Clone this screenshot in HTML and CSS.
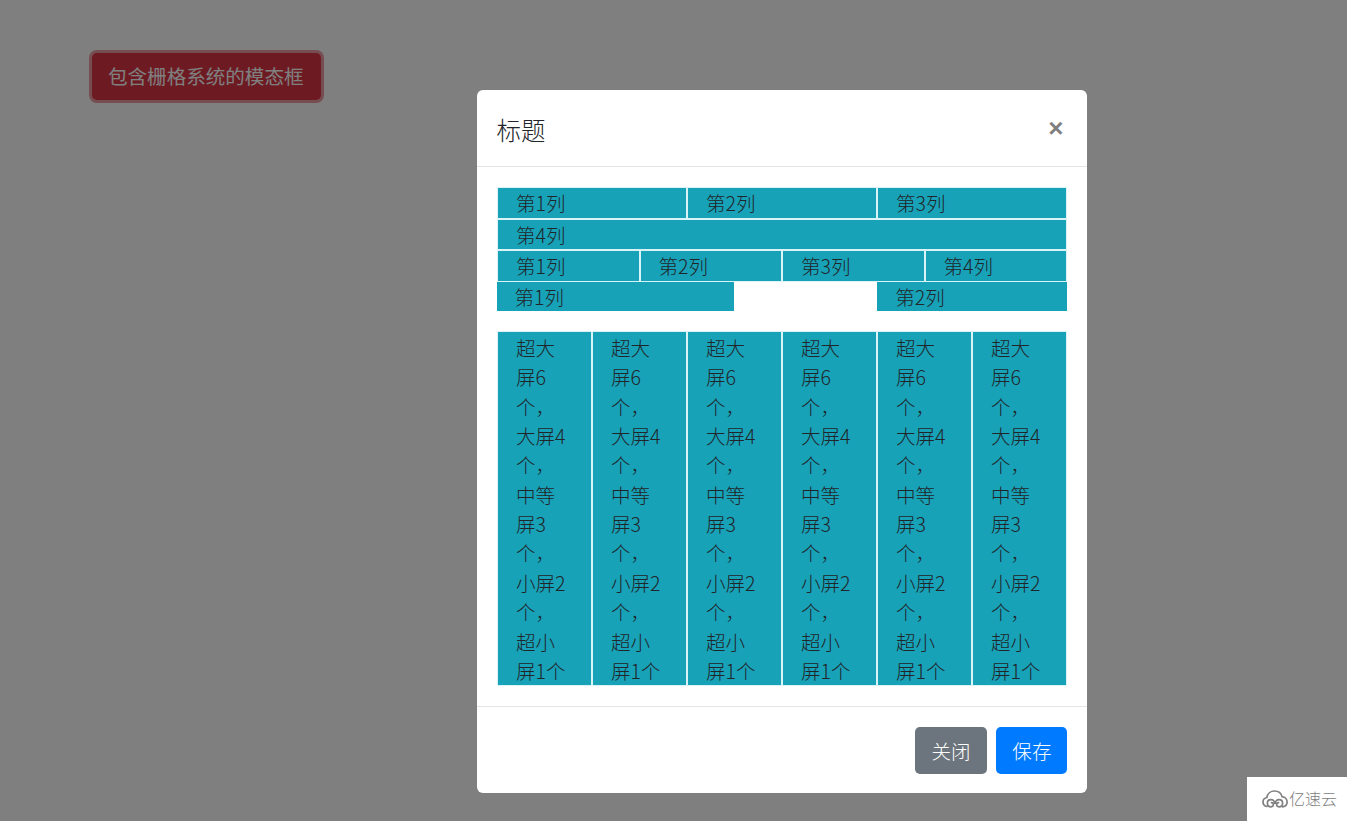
FILE: index.html
```html
<!DOCTYPE html>
<html lang="zh-CN">
<head>
    <meta charset="UTF-8">
    <meta name="viewport" content="width=device-width, initial-scale=1.0">
    <title>模态框</title>
    <link rel="stylesheet" href="styles.css">
</head>
<body>
    <button class="btn btn-danger btn-focus">包含栅格系统的模态框</button>

    <div class="backdrop"></div>

    <div class="modal">
        <div class="modal-header">
            <h5 class="modal-title">标题</h5>
            <span class="close">&times;</span>
        </div>
        <div class="modal-body">
            <div class="row">
                <div class="col col-4">第1列</div>
                <div class="col col-4">第2列</div>
                <div class="col col-4">第3列</div>
                <div class="col col-12">第4列</div>
            </div>
            <div class="row">
                <div class="col col-3">第1列</div>
                <div class="col col-3">第2列</div>
                <div class="col col-3">第3列</div>
                <div class="col col-3">第4列</div>
            </div>
            <div class="row row-offset">
                <div class="col plain col-5">第1列</div>
                <div class="col plain col-4 offset-3">第2列</div>
            </div>
            <div class="row row-tall">
                <div class="col col-2">超大屏6个，大屏4个，中等屏3个，小屏2个，超小屏1个</div>
                <div class="col col-2">超大屏6个，大屏4个，中等屏3个，小屏2个，超小屏1个</div>
                <div class="col col-2">超大屏6个，大屏4个，中等屏3个，小屏2个，超小屏1个</div>
                <div class="col col-2">超大屏6个，大屏4个，中等屏3个，小屏2个，超小屏1个</div>
                <div class="col col-2">超大屏6个，大屏4个，中等屏3个，小屏2个，超小屏1个</div>
                <div class="col col-2">超大屏6个，大屏4个，中等屏3个，小屏2个，超小屏1个</div>
            </div>
        </div>
        <div class="modal-footer">
            <button class="btn btn-secondary">关闭</button>
            <button class="btn btn-primary">保存</button>
        </div>
    </div>

    <!-- 水印 -->
    <div class="watermark">
        <svg class="watermark-logo" viewBox="0 0 26 20" width="26" height="20" fill="none" stroke="#808080" stroke-width="1.7" stroke-linecap="round">
            <path d="M5 17.5C2.6 17 1 15.2 1 13c0-2.3 1.6-4.1 3.9-4.5C5.4 4.6 8.6 2 12.5 2c3.6 0 6.7 2.3 7.6 5.6 2.9.3 5 2.6 5 5.4 0 2.6-1.8 4.5-4.4 4.8"/>
            <path d="M12.6 14.2c0-2-1.5-3.5-3.6-3.5-2 0-3.6 1.5-3.6 3.5s1.5 3.6 3.6 3.6c1.4 0 2.4-.9 2.4-2.2 0-1.1-.8-1.9-1.9-1.9"/>
            <path d="M13.4 14.2c0-2 1.5-3.5 3.6-3.5 2 0 3.6 1.5 3.6 3.5s-1.5 3.6-3.6 3.6c-1.4 0-2.4-.9-2.4-2.2 0-1.1.8-1.9 1.9-1.9"/>
        </svg>
        <span class="watermark-text">亿速云</span>
    </div>
</body>
</html>
```

FILE: styles.css
```css
* {
    box-sizing: border-box;
}
html, body {
    height: 100%;
}
body {
    margin: 0;
    padding: 53px 0 0 92px;
    overflow: hidden;
    background-color: #fff;
    color: #212529;
    font-family: "Noto Sans CJK SC", "Noto Sans", sans-serif;
    font-size: 19.56px;
    font-weight: 300;
    line-height: 29.6px;
}
.btn {
    display: inline-block;
    padding: 7.7px 15px;
    border: 1px solid transparent;
    border-radius: 4.9px;
    color: #fff;
    font-family: inherit;
    font-size: 19.56px;
    font-weight: 300;
    line-height: 29.34px;
}
.btn-danger {
    width: 229px;
    padding: 6.7px 15px 8.7px;
    background-color: #dc3545;
    font-weight: 400;
    text-align: left;
}
.btn-focus {
    box-shadow: 0 0 0 3px rgba(220, 53, 69, 0.5);
}
.btn-secondary {
    background-color: #6c757d;
}
.btn-primary {
    background-color: #007bff;
}
.backdrop {
    position: fixed;
    inset: 0;
    background-color: #000;
    opacity: 0.5;
}
.modal {
    position: fixed;
    top: 90px;
    left: 477px;
    width: 610px;
    height: 703px;
    background-color: #fff;
    border-radius: 5.9px;
}
.modal-header {
    display: flex;
    justify-content: space-between;
    height: 77px;
    padding: 21.5px 19.56px 0;
    border-bottom: 1px solid #e3e6e9;
}
.modal-title {
    margin: 0;
    font-size: 24.45px;
    font-weight: 300;
    line-height: 36.7px;
}
.close {
    margin-top: -2px;
    margin-right: 4px;
    color: #000;
    font-family: "Liberation Sans", sans-serif;
    font-size: 26px;
    font-weight: 700;
    line-height: 36.7px;
    opacity: 0.5;
}
.modal-body {
    padding: 20px;
}
.row {
    display: grid;
    grid-template-columns: repeat(12, 1fr);
}
.row-offset {
    margin-bottom: 19.6px;
    margin-left: -0.5px;
    margin-right: -0.5px;
}
.row-tall {
    line-height: 29.36px;
}
.col {
    padding: 0 18px;
    background-color: #17a2b8;
    border: 1px solid #d9f3f6;
}
.row-tall .col {
    padding-top: 1px;
}
.plain {
    border: none;
}
.col-2 {
    grid-column: span 2;
}
.col-3 {
    grid-column: span 3;
}
.col-4 {
    grid-column: span 4;
}
.col-5 {
    grid-column: span 5;
}
.col-12 {
    grid-column: span 12;
}
.offset-3 {
    grid-column: 9 / span 4;
}
.modal-footer {
    display: flex;
    justify-content: flex-end;
    gap: 9.8px;
    padding: 20px 19.56px;
    border-top: 1px solid #e3e6e9;
}
.watermark {
    position: fixed;
    right: 0;
    bottom: 0;
    display: flex;
    align-items: center;
    gap: 1px;
    width: 100px;
    height: 44px;
    padding-left: 15px;
    background-color: #fff;
}
.watermark-text {
    color: #808080;
    font-size: 16px;
}
```
